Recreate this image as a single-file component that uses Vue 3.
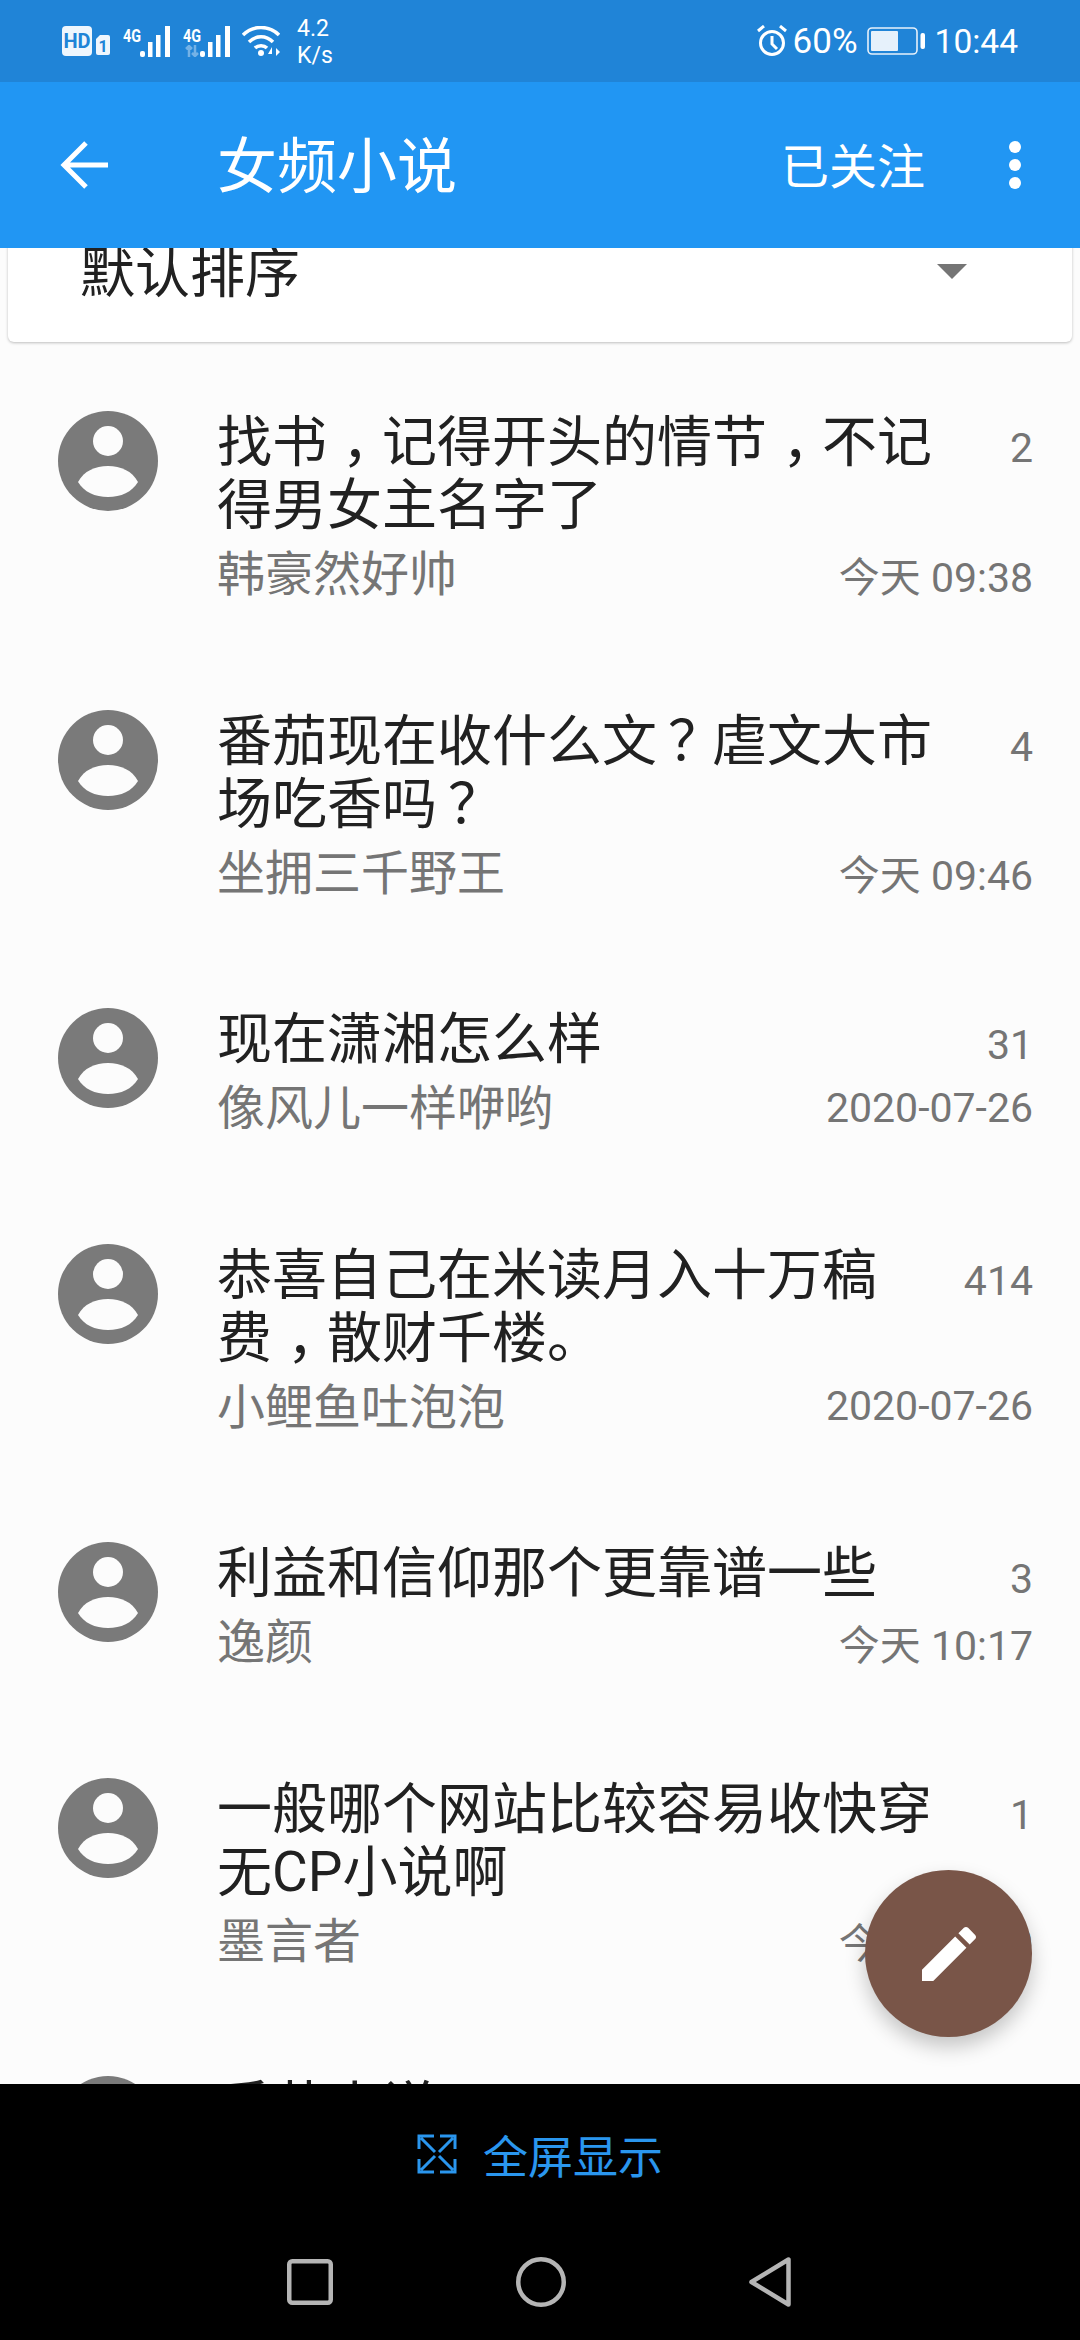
<script setup>
const topics = [
  { lines: ['找书，记得开头的情节，不记', '得男女主名字了'], author: '韩豪然好帅', count: '2', time: '今天 09:38' },
  { lines: ['番茄现在收什么文？虐文大市', '场吃香吗？'], author: '坐拥三千野王', count: '4', time: '今天 09:46' },
  { lines: ['现在潇湘怎么样'], author: '像风儿一样咿哟', count: '31', time: '2020-07-26' },
  { lines: ['恭喜自己在米读月入十万稿', '费，散财千楼。'], author: '小鲤鱼吐泡泡', count: '414', time: '2020-07-26' },
  { lines: ['利益和信仰那个更靠谱一些'], author: '逸颜', count: '3', time: '今天 10:17' },
  { lines: ['一般哪个网站比较容易收快穿', '无CP小说啊'], author: '墨言者', count: '1', time: '今天 10:20' },
  { lines: ['手艺小说'], author: '', count: '', time: '' }
]
const parts = (line) => line.split(/([，？])/).filter(Boolean)
const partClass = (s) => (s === '，' ? 'p-comma' : s === '？' ? 'p-q' : '')
</script>

<template>
  <div class="phone">
    <header class="top">
      <div class="status">
        <div class="status-left">
          <svg class="hd" width="48" height="30" viewBox="0 0 48 30">
            <rect width="30" height="30" rx="4" fill="#eef6fd" />
            <text x="15" y="22" text-anchor="middle" class="hd-text">HD</text>
            <path d="M34 13l4-4h8a2 2 0 0 1 2 2v16a2 2 0 0 1-2 2H36a2 2 0 0 1-2-2z" fill="#eef6fd" />
            <text x="41" y="26" text-anchor="middle" class="sim-text">1</text>
          </svg>
          <div class="net">
            <span class="net-label">4G</span>
            <svg width="33" height="31" viewBox="0 0 33 31"><g fill="#fff"><rect y="25" width="5" height="6" rx="2" /><rect x="8" y="16" width="4.5" height="15" /><rect x="16" y="9" width="4.5" height="22" /><rect x="25" width="5" height="31" /></g></svg>
          </div>
          <div class="net net-second">
            <span class="net-label">4G</span>
            <svg width="33" height="31" viewBox="0 0 33 31"><g fill="#fff"><rect y="25" width="5" height="6" rx="2" /><rect x="8" y="16" width="4.5" height="15" /><rect x="16" y="9" width="4.5" height="22" /><rect x="25" width="5" height="31" /></g></svg>
            <svg class="updown" width="14" height="12" viewBox="0 0 14 12" fill="none" stroke="rgba(255,255,255,.38)" stroke-width="2.5"><path d="M4 12V1M1 4l3-3 3 3M10 0v11M7 8l3 3 3-3" /></svg>
          </div>
          <svg class="wifi" width="38" height="30" viewBox="0 0 38 30" fill="none" stroke="#fff" stroke-width="3.5">
            <path d="M1 9C11-1 27-1 37 9" />
            <path d="M7 16C14 9 24 9 31 16" />
            <path d="M13 22C16 19 22 19 25 22" />
            <circle cx="19" cy="27" r="3" fill="#fff" stroke="none" />
            <path d="M30 21l-4 7h4zM33 21v9M34 22l4 4-4 4z" fill="#fff" stroke="none" />
          </svg>
          <div class="speed"><span>4.2</span><span>K/s</span></div>
        </div>
        <div class="status-right">
          <svg width="32" height="32" viewBox="0 0 32 32" fill="none" stroke="#fff" stroke-width="3">
            <circle cx="16" cy="18" r="11.5" />
            <path d="M16 11v8l5 5M2 6l6-5M30 6l-6-5" />
          </svg>
          <span class="pct">60%</span>
          <svg class="battery" width="58" height="28" viewBox="0 0 58 28">
            <rect x="1" y="1" width="49" height="26" rx="4" fill="none" stroke="#e6f1fb" stroke-width="1.6" />
            <rect x="4" y="4" width="27" height="20" rx="1" fill="#e6f1fb" />
            <rect x="53.500" y="6" width="4.500" height="16" rx="2" fill="#fff" />
          </svg>
          <span class="clock">10:44</span>
        </div>
      </div>
      <div class="appbar">
        <svg class="back" width="48" height="48" viewBox="0 0 48 48" fill="none" stroke="#fff" stroke-width="5">
          <path d="M48 24H4M26 2L4 24l22 22" />
        </svg>
        <h1 class="title">女频小说</h1>
        <span class="follow">已关注</span>
        <div class="more"><i></i><i></i><i></i></div>
      </div>
    </header>

    <main class="content">
      <div class="sort">
        <span>默认排序</span>
        <i class="caret"></i>
      </div>
      <div class="list">
        <article v-for="(t, i) in topics" :key="i" class="row">
          <svg class="avatar" width="100" height="100" viewBox="0 0 100 100">
            <circle cx="50" cy="50" r="50" fill="#7a7a7a" />
            <circle cx="50" cy="30" r="15" fill="#fcfcfc" />
            <path d="M20 71C26 60 37 55 50 55s24 5 30 16C74 81 63 86 50 86S26 81 20 71z" fill="#fcfcfc" />
          </svg>
          <div class="body">
            <div class="head">
              <div class="name">
                <div v-for="l in t.lines" :key="l"><span v-for="(s, j) in parts(l)" :key="j" :class="partClass(s)">{{ s }}</span></div>
              </div>
              <span class="count">{{ t.count }}</span>
            </div>
            <div class="meta">
              <span class="author">{{ t.author }}</span>
              <span class="time">{{ t.time }}</span>
            </div>
          </div>
        </article>
      </div>
      <button class="fab" type="button" aria-label="compose">
        <svg width="72" height="72" viewBox="0 0 24 24" fill="#fff">
          <path d="M3 17.250V21h3.750L17.810 9.940l-3.750-3.750L3 17.250zM20.710 7.040c.39-.39.39-1.020 0-1.410l-2.340-2.340c-.39-.39-1.020-.39-1.410 0l-1.830 1.830 3.750 3.750 1.830-1.830z" />
        </svg>
      </button>
    </main>

    <div class="navzone">
      <div class="fullscreen">
        <svg width="40" height="40" viewBox="0 0 40 40" fill="none" stroke="#2a96ee" stroke-width="3">
          <path d="M2 15V2h15M23 2h15v13M2 25v13h15M23 38h15V25M4 4l14 14M36 4L22 18M4 36l14-14M36 36L22 22" />
        </svg>
        <span>全屏显示</span>
      </div>
      <div class="softkeys">
        <svg width="46" height="46" viewBox="0 0 46 46" fill="none" stroke="#b5b5b5" stroke-width="4.500"><rect x="2.250" y="2.250" width="41.500" height="41.500" rx="3" /></svg>
        <svg width="50" height="50" viewBox="0 0 50 50" fill="none" stroke="#b5b5b5" stroke-width="4.500"><circle cx="25" cy="25" r="22.750" /></svg>
        <svg width="42" height="50" viewBox="0 0 42 50" fill="none" stroke="#b5b5b5" stroke-width="4.500" stroke-linejoin="round"><path d="M39.500 2.500v45L2.500 25z" /></svg>
      </div>
    </div>
  </div>
</template>

<style>
html, body { margin: 0; background: #000; }
</style>

<style scoped>
.phone {
  width: 1080px;
  height: 2340px;
  overflow: hidden;
  display: flex;
  flex-direction: column;
  background: #fcfcfc;
  font-family: "Roboto", "Noto Sans CJK SC", sans-serif;
}
.top {
  position: relative;
  z-index: 3;
  flex: none;
  color: #fff;
}
.status {
  height: 82px;
  background: #2084d7;
  display: flex;
  justify-content: space-between;
  align-items: center;
  padding: 0 62px;
  box-sizing: border-box;
}
.status-left, .status-right { display: flex; align-items: center; }
.hd { margin-right: 13px; flex: none; }
.hd-text { font: 700 20px "Roboto", sans-serif; fill: #2084d7; }
.sim-text { font: 700 16px "Roboto", sans-serif; fill: #2084d7; }
.net { display: flex; align-items: flex-start; position: relative; margin-right: 10px; }
.net-label {
  width: 17px;
  font: 700 18px/16px "Roboto", sans-serif;
  margin-top: 2px;
  transform: scaleX(.8);
  transform-origin: left;
}
.updown { position: absolute; left: 2px; top: 19px; }
.wifi { margin-left: -1px; margin-right: 17px; }
.speed {
  display: flex;
  flex-direction: column;
  font-size: 23px;
  line-height: 27px;
  margin-top: 2px;
}
.pct { font-size: 35px; margin-left: 5px; }
.battery { margin-left: 9px; margin-right: 10px; }
.clock { font-size: 33.500px; }
.appbar {
  height: 166px;
  background: #2196f3;
  display: flex;
  align-items: center;
  padding: 0 59px 0 60px;
  box-sizing: border-box;
}
.back { flex: none; margin-right: 109px; }
.title {
  margin: 5px 0 0;
  flex: 1;
  font-size: 60px;
  font-weight: 400;
  line-height: 1;
}
.follow { font-size: 48px; margin: 0 84px 4px 0; }
.more { display: flex; flex-direction: column; gap: 6px; }
.more i { width: 12px; height: 12px; border-radius: 50%; background: #fff; display: block; }
.content {
  flex: 1;
  min-height: 0;
  position: relative;
  overflow: hidden;
}
.sort {
  margin: -37px 8px 0;
  height: 131px;
  box-sizing: border-box;
  background: #fff;
  border-radius: 0 0 6px 6px;
  box-shadow: 0 1px 3px rgba(0,0,0,.25);
  display: flex;
  align-items: center;
  justify-content: space-between;
  padding: 0 105px 10px 72px;
  font-size: 55px;
  line-height: 60px;
  color: #212121;
}
.sort span { margin-top: 2px; }
.caret {
  width: 0;
  height: 0;
  border-left: 15px solid transparent;
  border-right: 15px solid transparent;
  border-top: 15px solid #757575;
}
.list { padding-top: 69px; }
.row {
  display: flex;
  padding: 0 47px 0 58px;
  margin-bottom: 106.500px;
}
.avatar { flex: none; }
.body { margin-left: 59px; flex: 1; min-width: 0; }
.head { display: flex; justify-content: space-between; }
.name { font-size: 55px; line-height: 63px; color: #212121; white-space: nowrap; }
.p-comma, .p-q { display: inline-block; }
.p-comma { transform: translateX(.27em); }
.p-q { transform: translateX(.2em); }
.count { font-size: 41px; height: 63px; line-height: 75px; color: #757575; }
.meta { display: flex; justify-content: space-between; align-items: center; height: 66px; }
.author { font-size: 48px; color: #757575; }
.time { font-size: 41px; color: #757575; margin-top: 7px; }
.fab {
  position: absolute;
  right: 48px;
  bottom: 47px;
  width: 167px;
  height: 167px;
  border: 0;
  padding: 0;
  border-radius: 50%;
  background: #795548;
  box-shadow: 0 10px 20px rgba(0,0,0,.22);
  display: flex;
  align-items: center;
  justify-content: center;
}
.navzone {
  flex: none;
  height: 256px;
  background: #000;
}
.fullscreen {
  height: 140px;
  display: flex;
  align-items: center;
  justify-content: center;
  gap: 26px;
  color: #2a96ee;
  font-size: 45px;
}
.softkeys {
  height: 116px;
  display: flex;
  justify-content: center;
  align-items: center;
  gap: 183px;
  padding-right: 3px;
}
</style>
